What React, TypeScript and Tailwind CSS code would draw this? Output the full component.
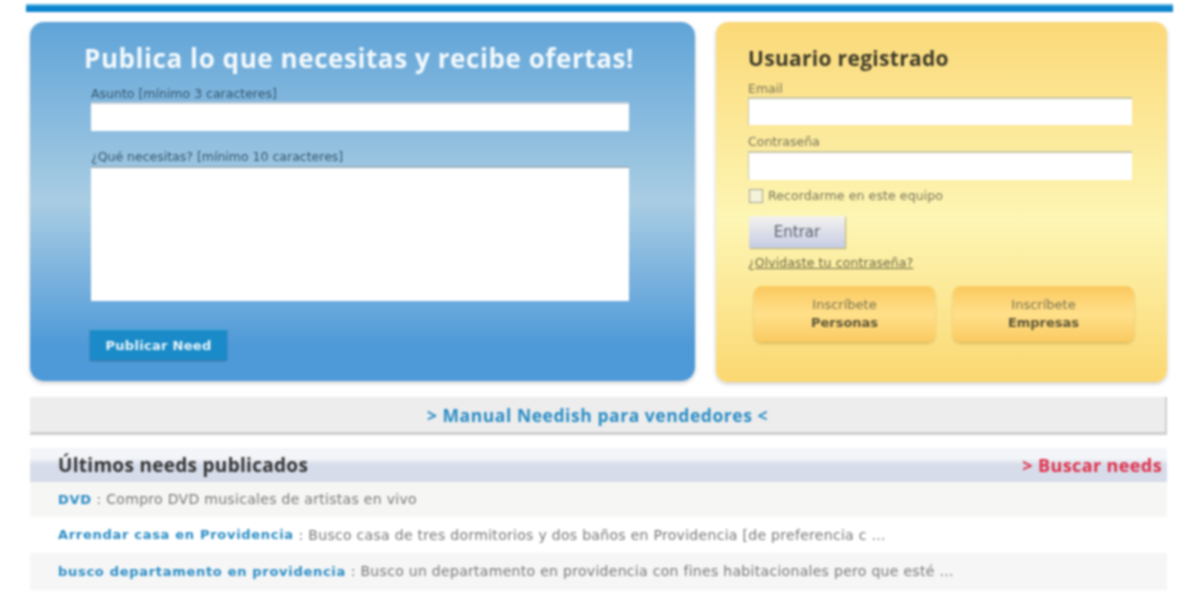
export default function App() {
  const rows = [
    { title: 'DVD', text: 'Compro DVD musicales de artistas en vivo', bg: 'bg-[#f6f6f5]', h: 'h-[35px]' },
    { title: 'Arrendar casa en Providencia', text: 'Busco casa de tres dormitorios y dos baños en Providencia [de preferencia c ...', bg: 'bg-white', h: 'h-[36px]' },
    { title: 'busco departamento en providencia', text: 'Busco un departamento en providencia con fines habitacionales pero que esté ...', bg: 'bg-[#f6f6f6]', h: 'h-[37px]' },
  ];

  return (
    <div className="h-[600px] w-[1200px] overflow-hidden bg-white font-['DejaVu_Sans',sans-serif] blur-[0.8px]">
      <div className="ml-[26px] mt-[4px] h-[8px] w-[1147px] border-t-2 border-[#5bb4e0] bg-[#0a84cc]" />

      <div className="ml-[30px] mt-[10px] flex w-[1137px] justify-between">
        {/* publicar */}
        <div className="h-[359px] w-[665px] rounded-[14px] bg-gradient-to-b from-[#5fa4d8] via-[#a9cde3] via-50% to-[#4e9ad8] to-90% pl-[54px] pt-[18px] shadow-[0_2px_4px_rgba(0,0,0,0.2)]">
          <h1 className="text-[26px] font-bold leading-[36px] tracking-[0.57px] text-[#f4f9fc] font-['Open_Sans',sans-serif]">
            Publica lo que necesitas y recibe ofertas!
          </h1>
          <div className="ml-[7px]">
            <label className="mt-[9px] block h-[17px] text-[12.5px] leading-[17px] text-[#33566e]">
              Asunto [mínimo 3 caracteres]
            </label>
            <div className="h-[29px] w-[538px] border-t-2 border-[#c4ced6] bg-white" />
            <label className="mt-[17px] block h-[18px] text-[12.5px] leading-[17px] text-[#33566e]">
              ¿Qué necesitas? [mínimo 10 caracteres]
            </label>
            <div className="h-[135px] w-[538px] border-t-2 border-[#9ab0bf] bg-white" />
            <button className="-ml-[1px] mt-[28px] h-[31px] w-[137px] border-t border-[#58aee0] bg-[#1a8bc8] pt-[2px] text-[13px] font-bold tracking-[0.3px] text-[#eaf5fb] shadow-[0_1px_2px_rgba(0,0,0,0.3)]">
              Publicar Need
            </button>
          </div>
        </div>

        {/* login */}
        <div className="h-[360px] w-[451px] rounded-[12px] bg-gradient-to-b from-[#fbd978] via-[#fdf6b4] via-55% to-[#fbd870] pl-[32px] pt-[22px] pr-[34px] shadow-[0_2px_4px_rgba(0,0,0,0.2)]">
          <h2 className="text-[21px] font-bold leading-[28px] tracking-[0.3px] text-[#3d3a28] font-['Open_Sans',sans-serif]">Usuario registrado</h2>
          <label className="mt-[10px] block h-[15px] text-[12.5px] leading-[14px] text-[#77745a]">Email</label>
          <div className="h-[28px] w-[384px] border-l border-t-2 border-[#c9c6a8] bg-white" />
          <label className="mt-[9px] block h-[17px] text-[12.5px] leading-[16px] text-[#77745a]">Contraseña</label>
          <div className="h-[29px] w-[384px] border-l border-t-2 border-[#c9c6a8] bg-white" />
          <div className="mt-[9px] ml-[1px] flex h-[14px] items-center gap-[5px]">
            <span className="h-[14px] w-[14px] border border-[#a3a294] bg-[#f5f2da]" />
            <span className="text-[12.5px] tracking-[0.1px] text-[#77745a]">Recordarme en este equipo</span>
          </div>
          <button className="mt-[13px] ml-[1px] block h-[32px] w-[96px] bg-gradient-to-b from-[#f4f3ee] to-[#c6cce4] pt-[1px] text-[15px] text-[#5a5e6e] shadow-[1px_1px_1px_rgba(0,0,0,0.25)]">
            Entrar
          </button>
          <a className="mt-[7px] block text-[12.5px] leading-[16px] tracking-[0.1px] text-[#6a6746] underline">¿Olvidaste tu contraseña?</a>
          <div className="mt-[15px] ml-[6px] flex w-[380px] justify-between">
            {['Personas', 'Empresas'].map((t) => (
              <div
                key={t}
                className="flex h-[56px] w-[181px] flex-col items-center justify-center rounded-[8px] bg-gradient-to-b from-[#fbc95e] via-[#ffe08a] to-[#fbca60] text-[13px] leading-[18px] text-[#5c5536] shadow-[0_2px_3px_rgba(120,90,0,0.25)]"
              >
                <span className="text-[#7a7350]">Inscríbete</span>
                <span className="font-bold">{t}</span>
              </div>
            ))}
          </div>
        </div>
      </div>

      <div className="ml-[30px] mt-[15px] flex h-[38px] w-[1137px] items-center justify-center border-b-[3px] border-r-2 border-[#cfcfcf] bg-[#ededed] pt-[2px] text-[17.5px] font-bold tracking-[0.55px] text-[#2a8cc4] font-['Open_Sans',sans-serif]">
        &gt; Manual Needish para vendedores &lt;
      </div>

      <div className="ml-[30px] mt-[13px] w-[1137px]">
        <div className="flex h-[34px] items-center justify-between bg-gradient-to-b from-[#f4f5f8] from-30% to-[#d6dcea] to-50% pl-[28px] pr-[5px]">
          <h3 className="text-[19px] font-bold tracking-[0.3px] text-[#333] font-['Open_Sans',sans-serif]">Últimos needs publicados</h3>
          <a className="text-[18px] font-bold tracking-[0.4px] text-[#e0304a] font-['Open_Sans',sans-serif]">&gt; Buscar needs</a>
        </div>
        {rows.map((r) => (
          <div key={r.title} className={`flex items-center pl-[28px] text-[14px] text-[#777] ${r.bg} ${r.h}`}>
            <a className="text-[13px] font-bold tracking-[0.7px] text-[#2a8cc4]">{r.title}</a>
            <span className="tracking-[0.3px]">&nbsp;: {r.text}</span>
          </div>
        ))}
      </div>
    </div>
  );
}
